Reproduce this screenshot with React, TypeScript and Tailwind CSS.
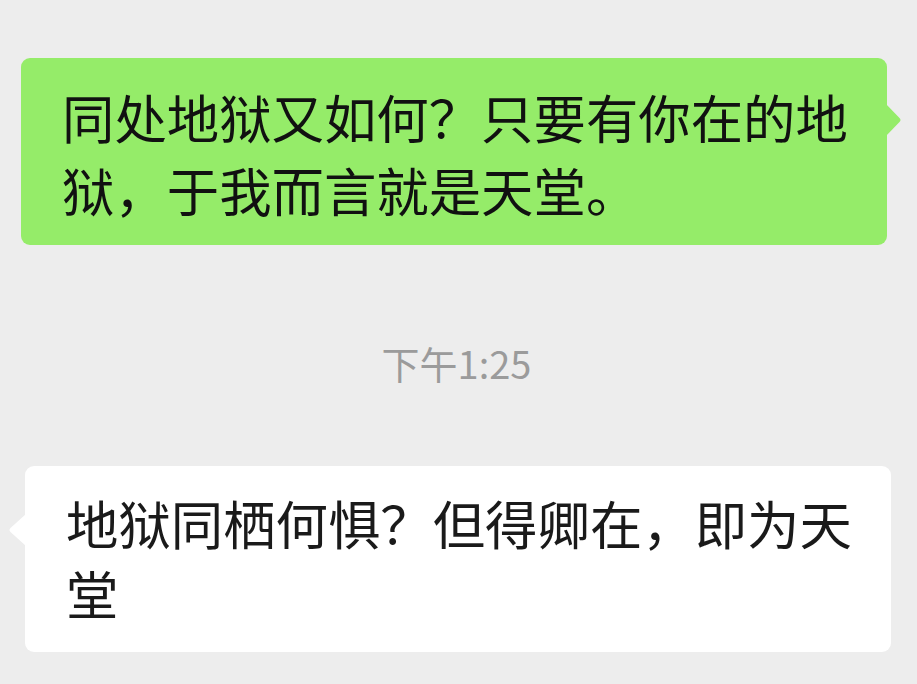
import React from "react";

const font = { fontFamily: '"Noto Sans CJK SC", "Noto Sans", sans-serif' };

export default function App() {
  return (
    <div
      className="w-[917px] h-[684px] bg-[#ededed] overflow-hidden flex flex-col"
      style={font}
    >
      <div className="pt-[58px] pl-[21px]">
        <div className="relative w-[866px] bg-[#95ec69] rounded-[9px] pl-[41px] pr-[20px] pt-[22px] pb-[19px] text-[52.4px] leading-[73px] text-[#111111]">
          同处地狱又如何？只要有你在的地狱，于我而言就是天堂。
          <svg
            className="absolute right-[-15px] top-[46px]"
            width="16"
            height="32"
            viewBox="0 0 16 32"
          >
            <path d="M0 0 L13.5 14 Q15.5 16 13.5 18 L0 32 Z" fill="#95ec69" />
          </svg>
        </div>
      </div>

      <div className="mt-[93px] flex justify-center pr-[4px] text-[38px] leading-[50px] text-[#9b9b9b]">
        下午1:25
      </div>

      <div className="mt-[78px] pl-[25px]">
        <div className="relative w-[866px] bg-white rounded-[9px] pl-[41px] pr-[20px] pt-[21px] pb-[25px] text-[52.4px] leading-[70px] text-[#1a1a1a]">
          地狱同栖何惧？但得卿在，即为天堂
          <svg
            className="absolute left-[-17px] top-[48px]"
            width="18"
            height="32"
            viewBox="0 0 18 32"
          >
            <path d="M18 0 L2.5 14 Q0.5 16 2.5 18 L18 32 Z" fill="#ffffff" />
          </svg>
        </div>
      </div>
    </div>
  );
}
